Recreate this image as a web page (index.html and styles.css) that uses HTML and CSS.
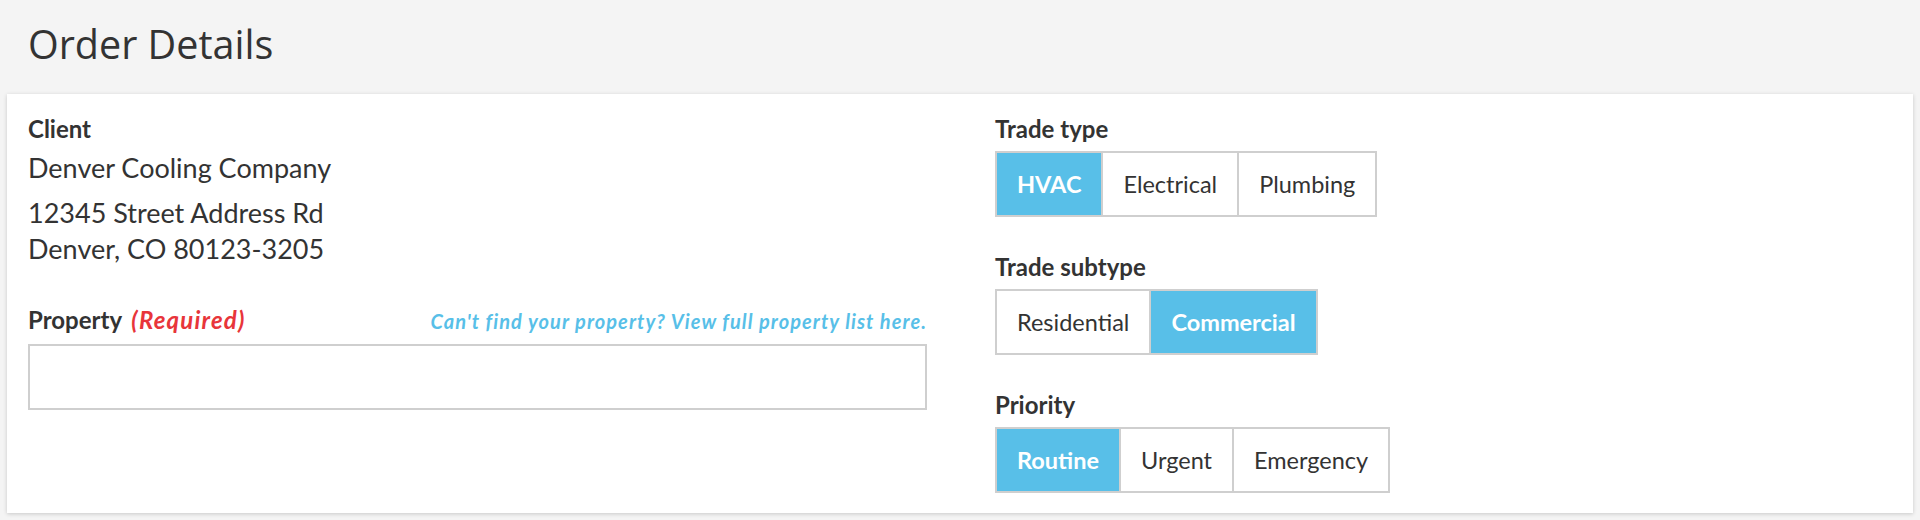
FILE: index.html
```html
<!DOCTYPE html>
<html lang="en">
<head>
<meta charset="utf-8">
<title>Order Details</title>
<link rel="stylesheet" href="styles.css">
</head>
<body>
<div class="page">
  <header class="header">
    <h1 class="title">Order Details</h1>
  </header>
  <section class="card">
    <div class="col-left">
      <div class="label">Client</div>
      <p class="company">Denver Cooling Company</p>
      <p class="address">12345 Street Address Rd<br>Denver, CO 80123-3205</p>
      <div class="property-head">
        <div class="label">Property <span class="required">(Required)</span></div>
        <a class="link" href="#">Can't find your property? View full property list here.</a>
      </div>
      <input class="text-input" type="text">
    </div>
    <div class="col-right">
      <div class="field">
        <div class="label">Trade type</div>
        <div class="seg">
          <button class="seg-btn active">HVAC</button>
          <button class="seg-btn">Electrical</button>
          <button class="seg-btn">Plumbing</button>
        </div>
      </div>
      <div class="field">
        <div class="label">Trade subtype</div>
        <div class="seg">
          <button class="seg-btn">Residential</button>
          <button class="seg-btn active">Commercial</button>
        </div>
      </div>
      <div class="field">
        <div class="label">Priority</div>
        <div class="seg">
          <button class="seg-btn active">Routine</button>
          <button class="seg-btn">Urgent</button>
          <button class="seg-btn">Emergency</button>
        </div>
      </div>
    </div>
  </section>
</div>
</body>
</html>
```

FILE: styles.css
```css
* { box-sizing: border-box; }
html, body { margin: 0; padding: 0; }
body {
  background: #f4f4f4;
  color: #333333;
  font-family: "Lato", "Noto Sans", sans-serif;
  width: 1920px;
  height: 520px;
  overflow: hidden;
}
.page {
  padding: 0 7px 7px 7px;
}
.header {
  height: 94px;
  padding: 17px 0 0 21px;
}
.title {
  margin: 0;
  font-family: "Open Sans", "Noto Sans", sans-serif;
  font-weight: 400;
  font-size: 39.5px;
  line-height: 54px;
  color: #333;
}
.card {
  background: #fff;
  height: 419px;
  box-shadow: 0 1px 4px rgba(0,0,0,0.18);
  padding: 20px 21px;
  display: grid;
  grid-template-columns: 899px 1fr;
  column-gap: 68px;
}
.label {
  font-weight: 700;
  font-size: 24px;
  line-height: 30px;
  color: #333;
}
.company {
  margin: 6px 0 0;
  font-size: 27px;
  line-height: 36px;
}
.address {
  margin: 9px 0 0;
  font-size: 27px;
  line-height: 36px;
}
.property-head {
  margin-top: 38px;
  display: flex;
  justify-content: space-between;
  align-items: baseline;
}
.required {
  color: #e8353a;
  font-style: italic;
  margin-left: 4px;
  letter-spacing: 1.2px;
}
.link {
  color: #58bfe8;
  font-style: italic;
  font-weight: 700;
  font-size: 20px;
  letter-spacing: 1.05px;
  text-decoration: none;
}
.text-input {
  display: block;
  margin-top: 9px;
  width: 100%;
  height: 66px;
  border: 2px solid #cfcfcf;
  background: #fff;
  font: inherit;
}
.field + .field {
  margin-top: 35px;
}
.seg {
  margin-top: 7px;
  display: inline-flex;
  border: 2px solid #cfcfcf;
  height: 66px;
}
.seg-btn {
  border: 0;
  border-left: 2px solid #cfcfcf;
  background: #fff;
  color: #333;
  font-family: inherit;
  font-size: 23.5px;
  padding: 0 20px;
  height: 100%;
}
.seg-btn:first-child { border-left: 0; }
.seg-btn.active {
  background: #58bfe8;
  color: #fff;
  font-weight: 700;
}
```
